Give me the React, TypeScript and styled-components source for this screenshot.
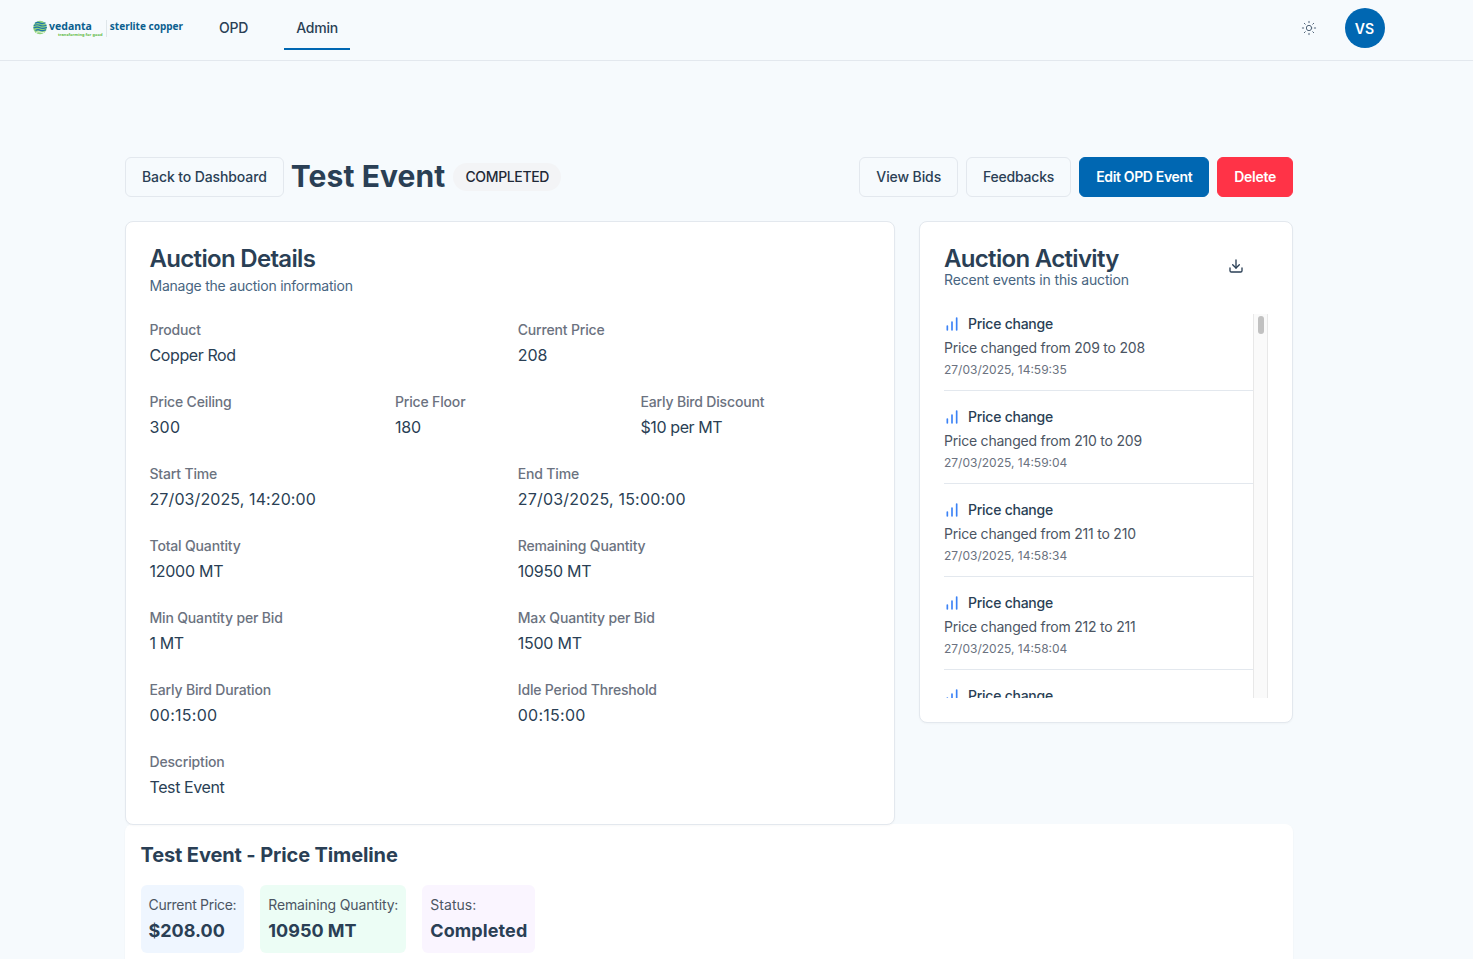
import React from "react";
import styled, { createGlobalStyle } from "styled-components";
import { Sun, Download, ChartNoAxesColumnIncreasing } from "lucide-react";

const Global = createGlobalStyle`
  html, body { margin: 0; padding: 0; height: 959px; overflow: hidden; background: #f6fafd; }
  body { font-family: Inter, "Liberation Sans", sans-serif; color: #2a3f55; -webkit-font-smoothing: antialiased; }
  * { box-sizing: border-box; }
`;

const Header = styled.header`
  height: 61px;
  display: flex;
  align-items: center;
  padding: 0 88px 4px 33px;
  border-bottom: 1px solid #e3e8ee;
`;
const Logo = styled.div`
  width: 150px;
  height: 20px;
  margin-top: 4px;
  display: flex;
  align-items: flex-start;
  color: #0b5f8f;
  font-family: "Noto Sans", sans-serif;
  font-weight: 700;
`;
const VedantaBlock = styled.div`
  position: relative;
  display: flex;
  align-items: flex-start;
  width: 75px;
  height: 17px;
  border-right: 1px solid #dfe6ea;
  margin-right: 3px;
`;
const VedantaWord = styled.span`
  font-size: 10.5px;
  line-height: 11px;
  height: 11px;
  margin: 1px 0 0 2px;
  color: #0b5f8f;
`;
const Tagline = styled.span`
  position: absolute;
  left: 25px;
  top: 12px;
  font-size: 4px;
  line-height: 5px;
  white-space: nowrap;
  color: #62bb46;
  font-weight: 700;
`;
const SterliteWord = styled.span`
  font-size: 10px;
  line-height: 13px;
  white-space: nowrap;
`;
const Nav = styled.nav`
  display: flex;
  margin-left: 24px;
  height: 50px;
  align-self: flex-start;
  gap: 24px;
`;
const NavLink = styled.a<{ $active?: boolean }>`
  height: 50px;
  padding: 6px 12px 0;
  display: flex;
  align-items: center;
  justify-content: center;
  font-size: 14px;
  font-weight: 500;
  letter-spacing: -0.22px;
  color: #2a3f55;
  border-bottom: 2px solid ${(p) => (p.$active ? "#0067b2" : "transparent")};
`;
const HeaderRight = styled.div`
  margin-left: auto;
  display: flex;
  align-items: center;
  gap: 28px;
  color: #52657a;
`;
const Avatar = styled.div`
  width: 40px;
  height: 40px;
  border-radius: 50%;
  background: #0067b2;
  color: #fff;
  display: flex;
  align-items: center;
  justify-content: center;
  padding-right: 1px;
  font-size: 14px;
  font-weight: 600;
`;
const Main = styled.main`
  width: 1168px;
  margin: 0 0 0 125px;
  padding-top: 96px;
`;
const TitleBar = styled.div`
  display: flex;
  align-items: center;
  height: 40px;
  margin-bottom: 24px;
`;
const Button = styled.button<{ $variant?: "outline" | "primary" | "danger"; $spacing: number }>`
  height: 40px;
  padding: 0 16px 2px;
  border-radius: 6px;
  font-family: inherit;
  font-size: 14px;
  font-weight: ${(p) => (p.$variant === "primary" || p.$variant === "danger" ? 600 : 500)};
  letter-spacing: ${(p) => p.$spacing}px;
  border: 1px solid ${(p) => (p.$variant === "primary" ? "#0067b2" : p.$variant === "danger" ? "#ff3347" : "#e3e8ee")};
  background: ${(p) => (p.$variant === "primary" ? "#0067b2" : p.$variant === "danger" ? "#ff3347" : "#f6fafd")};
  color: ${(p) => (p.$variant === "primary" || p.$variant === "danger" ? "#fff" : "#2a3f55")};
  white-space: nowrap;
`;
const PageTitle = styled.h1`
  margin: -2px 8px 0 7px;
  font-size: 30px;
  line-height: 36px;
  font-weight: 700;
  letter-spacing: 0.1px;
  color: #2a3f55;
`;
const Badge = styled.span`
  height: 28px;
  padding: 0 12px 1px;
  border-radius: 14px;
  background: #f3f4f6;
  color: #1f2937;
  font-size: 14px;
  font-weight: 500;
  letter-spacing: -0.35px;
  display: flex;
  align-items: center;
`;
const Actions = styled.div`
  margin-left: auto;
  display: flex;
  gap: 8px;
`;
const Columns = styled.div`
  display: flex;
  align-items: flex-start;
  gap: 24px;
`;
const Card = styled.section`
  background: #fff;
  border: 1px solid #e3e8ee;
  border-radius: 8px;
  box-shadow: 0 1px 2px rgba(0, 0, 0, 0.03);
`;
const DetailsCard = styled(Card)`
  width: 770px;
  height: 604px;
  padding: 25px 24px 0 23.5px;
`;
const ActivityCard = styled(Card)`
  width: 374px;
  height: 502px;
  padding: 25px 24px 0;
`;
const CardTitle = styled.h2`
  margin: 0;
  font-size: 24px;
  line-height: 24px;
  height: 24px;
  font-weight: 600;
  letter-spacing: -0.68px;
  color: #2a3f55;
`;
const Subtitle = styled.p<{ $tight?: boolean }>`
  margin: ${(p) => (p.$tight ? "-1px" : "5px")} 0 0;
  font-size: 14px;
  line-height: 20px;
  letter-spacing: ${(p) => (p.$tight ? "-0.16px" : "-0.23px")};
  color: #486581;
`;
const Fields = styled.div`
  margin-top: 24px;
  display: flex;
  flex-direction: column;
  gap: 25px;
`;
const Row = styled.div<{ $cols: number }>`
  display: grid;
  grid-template-columns: repeat(${(p) => p.$cols}, 1fr);
  gap: 16px;
`;
const Label = styled.div`
  font-size: 14px;
  line-height: 20px;
  font-weight: 500;
  letter-spacing: -0.17px;
  color: #6b7280;
  margin-bottom: 3px;
`;
const Value = styled.div<{ $spacing: number }>`
  font-size: 16px;
  line-height: 24px;
  letter-spacing: ${(p) => p.$spacing}px;
  color: #2a3f55;
`;
const ActivityHead = styled.div`
  display: flex;
  align-items: flex-start;
  justify-content: space-between;
  height: 67px;
`;
const IconButton = styled.div`
  width: 40px;
  height: 40px;
  margin: -1px 12px 0 0;
  display: flex;
  align-items: center;
  justify-content: center;
  color: #2a3f55;
`;
const Feed = styled.div`
  height: 384px;
  width: 324px;
  display: flex;
`;
const FeedList = styled.div`
  flex: 1;
  min-width: 0;
  overflow: hidden;
`;
const ScrollTrack = styled.div`
  width: 15px;
  flex: none;
  padding: 2px 3px 0 4px;
  background: #fafafa;
  border-left: 1px solid #e8e8e8;
  border-right: 1px solid #e8e8e8;
`;
const ScrollThumb = styled.div`
  height: 18px;
  border-radius: 4px;
  background: #c1c1c1;
`;
const FeedItem = styled.div`
  height: 77px;
  margin-bottom: 16px;
  border-bottom: 1px solid #e3e8ee;
`;
const ItemHead = styled.div`
  display: flex;
  align-items: center;
  gap: 8px;
  height: 20px;
  color: #3b82f6;
`;
const ItemTitle = styled.span`
  margin-bottom: 2px;
  font-size: 14px;
  font-weight: 500;
  letter-spacing: -0.25px;
  color: #2a3f55;
`;
const ItemText = styled.div`
  margin-top: 4px;
  font-size: 14px;
  line-height: 20px;
  letter-spacing: -0.22px;
  color: #4b5563;
`;
const ItemDate = styled.div`
  margin-top: 4px;
  font-size: 12px;
  line-height: 16px;
  color: #6b7280;
`;
const TimelineCard = styled.section`
  background: #fff;
  border-radius: 8px 8px 0 0;
  height: 150px;
  padding: 17px 16px 0 15.5px;
  margin-top: -1px;
  box-shadow: 0 1px 2px rgba(0, 0, 0, 0.05);
`;
const TimelineTitle = styled.h3`
  margin: 0;
  font-size: 20px;
  line-height: 28px;
  font-weight: 700;
  letter-spacing: -0.12px;
  color: #2a3f55;
`;
const Stats = styled.div`
  display: flex;
  gap: 16px;
  margin-top: 16px;
`;
const Stat = styled.div<{ $bg: string }>`
  background: ${(p) => p.$bg};
  border-radius: 6px;
  padding: 8px;
  height: 68px;
`;
const StatLabel = styled.div<{ $spacing: number }>`
  font-size: 14px;
  line-height: 24px;
  letter-spacing: ${(p) => p.$spacing}px;
  color: #4b5563;
`;
const StatValue = styled.div<{ $spacing?: number }>`
  font-size: 18px;
  line-height: 28px;
  font-weight: 700;
  letter-spacing: ${(p) => p.$spacing ?? 0}px;
  color: #2a3f55;
`;

type Field = { label: string; value: string; spacing: number };
const rows: Field[][] = [
  [{ label: "Product", value: "Copper Rod", spacing: -0.4 }, { label: "Current Price", value: "208", spacing: 0 }],
  [{ label: "Price Ceiling", value: "300", spacing: 0.2 }, { label: "Price Floor", value: "180", spacing: -0.2 }, { label: "Early Bird Discount", value: "$10 per MT", spacing: -0.4 }],
  [{ label: "Start Time", value: "27/03/2025, 14:20:00", spacing: 0.1 }, { label: "End Time", value: "27/03/2025, 15:00:00", spacing: 0.2 }],
  [{ label: "Total Quantity", value: "12000 MT", spacing: -0.25 }, { label: "Remaining Quantity", value: "10950 MT", spacing: -0.25 }],
  [{ label: "Min Quantity per Bid", value: "1 MT", spacing: -0.4 }, { label: "Max Quantity per Bid", value: "1500 MT", spacing: -0.25 }],
  [{ label: "Early Bird Duration", value: "00:15:00", spacing: 0.25 }, { label: "Idle Period Threshold", value: "00:15:00", spacing: 0.25 }],
  [{ label: "Description", value: "Test Event", spacing: -0.4 }],
];

const events = [
  { from: 209, to: 208, time: "14:59:35" },
  { from: 210, to: 209, time: "14:59:04" },
  { from: 211, to: 210, time: "14:58:34" },
  { from: 212, to: 211, time: "14:58:04" },
  { from: 213, to: 212, time: "14:57:34" },
];

export default function App() {
  return (
    <>
      <Global />
      <Header>
        <Logo>
          <VedantaBlock>
            <svg width="14" height="15" viewBox="0 0 14 15" aria-hidden="true">
              <circle cx="7" cy="7.5" r="6.8" fill="#8fd17a" />
              <path d="M2 3.2 Q5 1.8 7 3 T12.5 2.8 M0.8 5.6 Q4 4 7 5.4 T13.6 5 M0.6 8 Q4 6.4 7 7.8 T13.8 7.4 M2.5 10.4 Q5 9 7 10.2 T13 9.8" stroke="#1f74ad" strokeWidth="1.2" fill="none" />
              <path d="M3 12.4 Q6 11.2 8 12.2 T11.5 12" stroke="#fff" strokeWidth="0.8" fill="none" />
            </svg>
            <VedantaWord>vedanta</VedantaWord>
            <Tagline>transforming for good</Tagline>
          </VedantaBlock>
          <SterliteWord>sterlite copper</SterliteWord>
        </Logo>
        <Nav>
          <NavLink>OPD</NavLink>
          <NavLink $active>Admin</NavLink>
        </Nav>
        <HeaderRight>
          <Sun size={16} strokeWidth={1.5} />
          <Avatar>VS</Avatar>
        </HeaderRight>
      </Header>
      <Main>
        <TitleBar>
          <Button $spacing={-0.11}>Back to Dashboard</Button>
          <PageTitle>Test Event</PageTitle>
          <Badge>COMPLETED</Badge>
          <Actions>
            <Button $spacing={-0.11}>View Bids</Button>
            <Button $spacing={-0.22}>Feedbacks</Button>
            <Button $variant="primary" $spacing={-0.35}>Edit OPD Event</Button>
            <Button $variant="danger" $spacing={-0.28}>Delete</Button>
          </Actions>
        </TitleBar>
        <Columns>
          <DetailsCard>
            <CardTitle>Auction Details</CardTitle>
            <Subtitle>Manage the auction information</Subtitle>
            <Fields>
              {rows.map((r, i) => (
                <Row key={i} $cols={r.length === 3 ? 3 : 2}>
                  {r.map((f) => (
                    <div key={f.label}>
                      <Label>{f.label}</Label>
                      <Value $spacing={f.spacing}>{f.value}</Value>
                    </div>
                  ))}
                </Row>
              ))}
            </Fields>
          </DetailsCard>
          <ActivityCard>
            <ActivityHead>
              <div>
                <CardTitle>Auction Activity</CardTitle>
                <Subtitle $tight>Recent events in this auction</Subtitle>
              </div>
              <IconButton>
                <Download size={16} strokeWidth={2} />
              </IconButton>
            </ActivityHead>
            <Feed>
              <FeedList>
                {events.map((e) => (
                  <FeedItem key={e.from}>
                    <ItemHead>
                      <ChartNoAxesColumnIncreasing size={16} strokeWidth={2.5} />
                      <ItemTitle>Price change</ItemTitle>
                    </ItemHead>
                    <ItemText>Price changed from {e.from} to {e.to}</ItemText>
                    <ItemDate>27/03/2025, {e.time}</ItemDate>
                  </FeedItem>
                ))}
              </FeedList>
              <ScrollTrack>
                <ScrollThumb />
              </ScrollTrack>
            </Feed>
          </ActivityCard>
        </Columns>
        <TimelineCard>
          <TimelineTitle>Test Event - Price Timeline</TimelineTitle>
          <Stats>
            <Stat $bg="#eff6ff">
              <StatLabel $spacing={-0.3}>Current Price:</StatLabel>
              <StatValue>$208.00</StatValue>
            </Stat>
            <Stat $bg="#ecfdf5">
              <StatLabel $spacing={-0.15}>Remaining Quantity:</StatLabel>
              <StatValue>10950 MT</StatValue>
            </Stat>
            <Stat $bg="#faf5ff">
              <StatLabel $spacing={0.05}>Status:</StatLabel>
              <StatValue $spacing={0.1}>Completed</StatValue>
            </Stat>
          </Stats>
        </TimelineCard>
      </Main>
    </>
  );
}
